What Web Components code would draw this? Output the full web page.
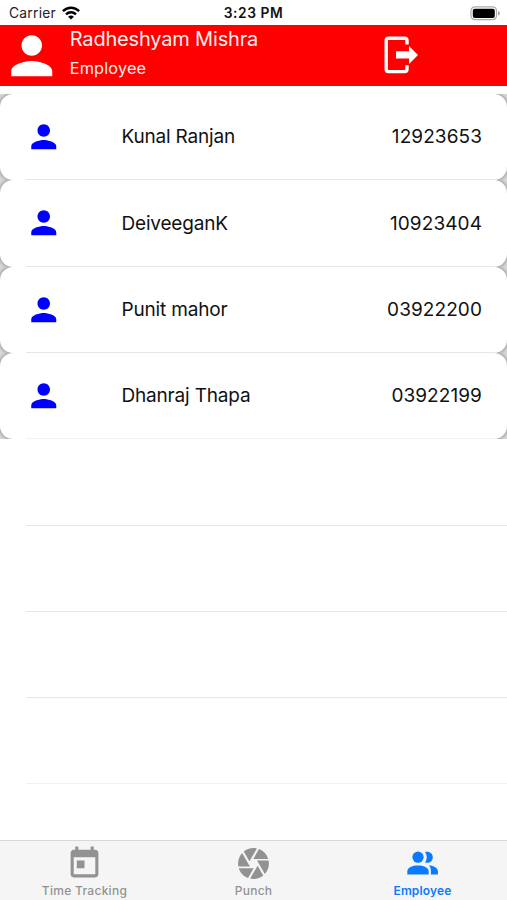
<!DOCTYPE html>
<html lang="en"><head><meta charset="utf-8"><title>Employee</title>
<style>html,body{margin:0;background:#fff;height:900px;overflow:hidden}</style></head>
<body><employee-screen></employee-screen>
<script>
const define=(name,render)=>customElements.define(name,class extends HTMLElement{
  connectedCallback(){if(!this.shadowRoot)this.attachShadow({mode:'open'}).innerHTML=render(this);}
});
const PERSON='<path d="M12 12c2.21 0 4-1.79 4-4s-1.79-4-4-4-4 1.79-4 4 1.79 4 4 4zm0 2c-2.67 0-8 1.34-8 4v2h16v-2c0-2.66-5.33-4-8-4z"/>';
const ICONS={
 today:'<svg width="37" height="37" viewBox="0 0 24 24"><path d="M19 3h-1V1h-2v2H8V1H6v2H5c-1.11 0-1.99.9-1.99 2L3 19c0 1.1.89 2 2 2h14c1.1 0 2-.9 2-2V5c0-1.1-.9-2-2-2zm0 16H5V8h14v11zM7 10h5v5H7v-5z"/></svg>',
 camera:'<svg width="37" height="37" viewBox="0 0 24 24"><path d="M9.4 10.5l4.77-8.26C13.47 2.09 12.75 2 12 2c-2.4 0-4.6.85-6.32 2.25l3.66 6.35.06-.1zM21.54 9c-.92-2.92-3.15-5.26-6-6.34L11.88 9h9.66zm.26 1h-7.49l.29.5 4.76 8.25C21 16.97 22 14.61 22 12c0-.69-.07-1.35-.2-2zM8.54 12l-3.9-6.75C3.01 7.03 2 9.39 2 12c0 .69.07 1.35.2 2h7.49l-1.15-2zm-6.08 3c.92 2.92 3.15 5.26 6 6.34L12.12 15H2.46zm11.27 0l-3.9 6.76c.7.15 1.42.24 2.17.24 2.4 0 4.6-.85 6.32-2.25l-3.66-6.35-.93 1.6z"/></svg>',
 people:'<svg width="31" height="24" viewBox="0 0 31 24"><circle cx="11" cy="6.2" r="5.6"/><path d="M18 .9c4.400-1.100 7.800 1.400 7.800 5.300s-3.500 6.500-7.800 5.300c2.300-3.300 2.300-7.300 0-10.600zM.3 23.500v-3.200c0-7.800 21.400-7.800 21.400 0v3.200zM22 14.300c4.800.6 8.900 2.800 8.900 6v3.200h-7v-3.200c0-2.400-.6-4.400-1.900-6z"/></svg>'
};
define('status-bar',()=>`<style>
:host{display:grid;grid-template-columns:1fr 1fr 1fr;align-items:center;height:25.400px;padding:1px 6px 0 9px;box-sizing:border-box;color:#222;font:13.800px Inter,sans-serif}
.l{display:flex;align-items:center;gap:6px}.carrier{letter-spacing:.25px}.c{justify-self:center;font-weight:600;font-size:13.800px;color:#111;letter-spacing:.55px;margin-right:3px;white-space:nowrap}.b{justify-self:end}svg{display:block}
</style><div class="l"><span class="carrier">Carrier</span><svg width="18" height="14" viewBox="0 0 18 14" fill="none" stroke="#000" stroke-width="2.500"><path d="M.9 5.100c4.700-4.600 11.500-4.600 16.200 0M4 8.400c3-2.800 7-2.800 10 0"/><path d="M9 13.600L6.100 10.700c1.700-1.500 4.100-1.500 5.800 0z" fill="#000" stroke="none"/></svg></div>
<span class="c">3:23 PM</span><svg class="b" width="31" height="15" viewBox="0 0 31 15"><rect x="1" y=".8" width="25.500" height="12.900" rx="4" fill="#fff" stroke="#aaa" stroke-width="1.200"/><rect x="2.800" y="2.700" width="22" height="9.200" rx="2" fill="#000"/><path d="M28 5c2.600.8 2.600 3.800 0 4.600z" fill="#aaa"/></svg>`);
define('user-header',()=>`<style>
:host{display:flex;height:61px;background:#f00;color:#fff;font-family:Inter,sans-serif;box-sizing:border-box;padding-left:.75px;overflow:hidden}
svg{display:block;flex:none}.p{margin-top:-.600px}.t{width:314.500px;padding:1.500px 0 0 7.500px;box-sizing:border-box;white-space:nowrap;opacity:.93}
.n{font-size:20px;line-height:24px;letter-spacing:-.18px}.r{font-size:16.300px;line-height:20px;margin-top:7px;letter-spacing:.15px}.out{margin:10.500px 0 0 7.300px}
</style><svg class="p" width="61.500" height="61.500" viewBox="0 0 24 24" fill="#fff">${PERSON}</svg>
<div class="t"><div class="n"><slot name="name"></slot></div><div class="r"><slot name="role"></slot></div></div>
<svg class="out" width="36" height="38" viewBox="0 0 36 38"><path d="M23 8.500V4.500Q23 2.200 20.700 2.200H4.500Q2.200 2.200 2.200 4.500V33.300Q2.200 35.600 4.500 35.600H20.700Q23 35.600 23 33.300V29.300" fill="none" stroke="#fff" stroke-width="3.400"/><path d="M12 15.300H25V10L34 19 25 28V22.500H12z" fill="#fff"/></svg>`);
define('employee-row',()=>`<style>
:host{display:block;height:86.300px;background:#dcdcdc;overflow:hidden;font:19px Inter,sans-serif;color:#111}
.card{display:flex;align-items:center;height:100%;box-sizing:border-box;border-radius:13px;background:#fff;box-shadow:0 0 5px rgba(0,0,0,.5);padding:0 25px 1px 25px}
.line{height:1px;margin:-1px 12px 0 26px;background:#e6e6e6}
:host([last]) .line{background:#f1f1f1}
svg{display:block;flex:none}.n{margin-left:59px;flex:1;letter-spacing:-.18px}.id{flex:none;letter-spacing:.08px}
</style><div class="card"><svg width="37.500" height="37.500" viewBox="0 0 24 24" fill="#00f">${PERSON}</svg><span class="n"><slot></slot></span><span class="id"><slot name="id"></slot></span></div><div class="line"></div>`);
define('empty-row',()=>`<style>:host{display:block;box-sizing:border-box;height:86.300px;margin-left:26px;border-bottom:1px solid #e6e6e6}:host([last]){border-color:#f1f1f1}</style>`);
define('tab-item',e=>`<style>
:host{display:flex;flex:1;flex-direction:column;align-items:center;color:#929292;fill:currentColor;font:500 12px/14px Inter,sans-serif;letter-spacing:.28px}
:host([active]){color:#0a7aff;font-weight:600;letter-spacing:.15px}.i{height:43.400px;display:flex;align-items:center;justify-content:center}svg{display:block;margin-top:1px}
</style><div class="i">${ICONS[e.getAttribute('icon')]}</div><slot></slot>`);
define('tab-bar',()=>`<style>:host{display:flex;height:60px;box-sizing:border-box;border-top:1px solid #d8d8d8;background:#f6f5f6}</style><slot></slot>`);
define('employee-screen',()=>`<style>
:host{display:flex;flex-direction:column;width:507px;height:900px;background:#fff;overflow:hidden}
main{flex:1;padding-top:7.700px;min-height:0;overflow:hidden}
</style><status-bar></status-bar><user-header><span slot="name">Radheshyam Mishra</span><span slot="role">Employee</span></user-header>
<main>
<employee-row>Kunal Ranjan<span slot="id">12923653</span></employee-row>
<employee-row>DeiveeganK<span slot="id">10923404</span></employee-row>
<employee-row>Punit mahor<span slot="id">03922200</span></employee-row>
<employee-row last>Dhanraj Thapa<span slot="id">03922199</span></employee-row>
<empty-row></empty-row><empty-row></empty-row><empty-row></empty-row><empty-row last></empty-row>
</main>
<tab-bar><tab-item icon="today">Time Tracking</tab-item><tab-item icon="camera">Punch</tab-item><tab-item icon="people" active>Employee</tab-item></tab-bar>`);
</script></body></html>
